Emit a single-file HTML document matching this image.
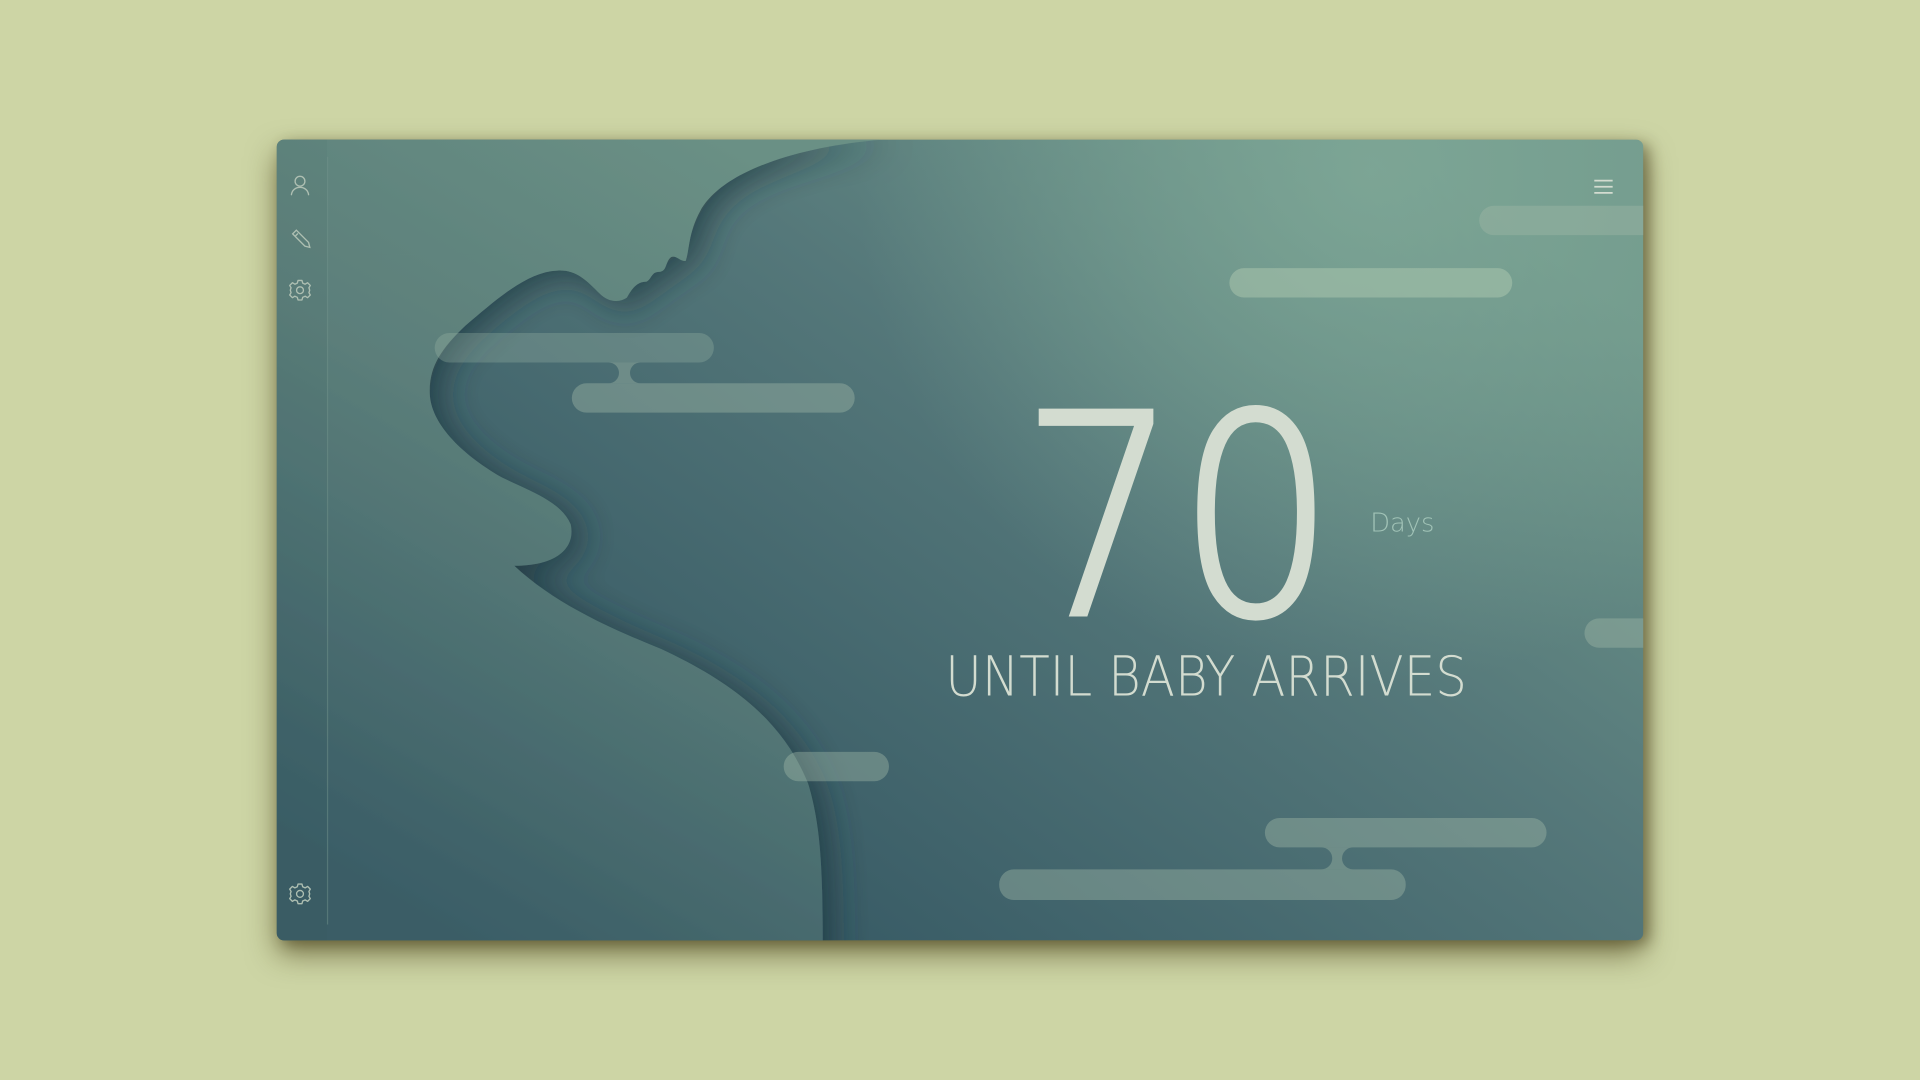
<!DOCTYPE html>
<html><head><meta charset="utf-8"><style>
html,body{margin:0;padding:0;width:1920px;height:1080px;overflow:hidden;background:#cdd5a5;}
#card{position:absolute;left:277px;top:140px;width:1366px;height:800px;border-radius:7px;box-shadow:0 14px 30px rgba(70,60,20,.6),6px 4px 14px rgba(60,50,20,.45);}
svg{position:absolute;left:0;top:0;}
.t{font-family:"DejaVu Sans","Liberation Sans",sans-serif;font-weight:200;}
</style></head><body>
<div id="card"></div>
<svg width="1920" height="1080" viewBox="0 0 1568 882">
<defs>
<clipPath id="c"><rect x="226" y="114" width="1116" height="654" rx="6"/></clipPath>
<linearGradient id="wg" x1="680" y1="760" x2="1150" y2="120" gradientUnits="userSpaceOnUse">
<stop offset="0" stop-color="#395c66"/><stop offset=".55" stop-color="#55787a"/><stop offset="1" stop-color="#6f978a"/></linearGradient>
<radialGradient id="glow" cx="1120" cy="140" r="420" gradientUnits="userSpaceOnUse">
<stop offset="0" stop-color="#80a998" stop-opacity=".8"/><stop offset="1" stop-color="#80a998" stop-opacity="0"/></radialGradient>
<linearGradient id="lg" x1="300" y1="720" x2="640" y2="140" gradientUnits="userSpaceOnUse">
<stop offset="0" stop-color="#3a5d66"/><stop offset=".55" stop-color="#5b7e7a"/><stop offset="1" stop-color="#6a9085"/></linearGradient>
<filter id="sh" x="-20%" y="-20%" width="140%" height="140%"><feDropShadow dx="8" dy="4" stdDeviation="14" flood-color="#1c363d" flood-opacity=".7"/></filter>
</defs>
<g clip-path="url(#c)">
<rect x="226" y="114" width="1116" height="654" fill="url(#wg)"/>
<rect x="226" y="114" width="1116" height="654" fill="url(#glow)"/>
<path filter="url(#sh)" fill="url(#lg)" d="M200,100 L720,114 C650,120 590,140 572,172 C562,190 563,205 560,213 C556,214 552,208 548,210 C543,214 545,222 538,222 C532,222 532,228 528,230 C520,230 516,236 512,243 C505,248 496,246 490,240 C478,228 470,220 455,221 C430,222 405,245 380,266 C360,285 350,300 351,322 C352,345 375,370 410,390 C435,402 458,410 466,428 C470,445 458,462 420,462 C450,490 490,510 540,530 C600,558 640,590 660,640 C672,680 672,720 672,800 L200,800 Z"/>
<rect x="226" y="114" width="41" height="654" fill="#2a4a52" fill-opacity=".05"/>
<line x1="267.5" y1="128" x2="267.5" y2="755" stroke="#6f918a" stroke-opacity=".5" stroke-width="1"/>
<g fill="#9fb8a8" fill-opacity=".42">
<rect x="1208" y="168" width="160" height="24" rx="12"/>
<rect x="1004" y="219" width="231" height="24" rx="12" fill="#a9c4ad" fill-opacity=".55"/>
<rect x="355" y="272" width="228" height="24" rx="12" fill-opacity=".3"/>
<rect x="467" y="313" width="231" height="24" rx="12"/>
<path d="M497,296 A8,8 0 0 1 497,313 L523,313 A8,8 0 0 1 523,296 Z"/>
<rect x="1294" y="505" width="80" height="24" rx="12"/>
<rect x="640" y="614" width="86" height="24" rx="12"/>
<rect x="1033" y="668" width="230" height="24" rx="12"/>
<rect x="816" y="710" width="332" height="25" rx="12"/>
<path d="M1079,692 A9,9 0 0 1 1079,710 L1105,710 A9,9 0 0 1 1105,692 Z"/>
</g>
<text class="t" x="834" y="501" font-size="226" fill="#d3dcd0" stroke="#d3dcd0" stroke-width="5" textLength="256" lengthAdjust="spacingAndGlyphs">70</text>
<text class="t" x="1119" y="434" font-size="21" fill="#a1c3b7">Days</text>
<text class="t" x="772" y="568" font-size="45" fill="#d3dcd0" textLength="426" lengthAdjust="spacingAndGlyphs">UNTIL BABY ARRIVES</text>
<g stroke="#aebfb2" stroke-width="1.1" fill="none" stroke-linecap="round">
<circle cx="245" cy="148" r="4"/>
<path d="M238,159 C239,151 251,151 252,159"/>
<path d="M239,191 L242,188 L252,198 L253,202 L249,201 Z M241,193 L243,191"/>
<g transform="translate(245,237)">
<circle r="2.8"/>
<path d="M-1.6,-8 L1.6,-8 L2.2,-5.8 L4.2,-4.9 L6.2,-6.1 L8.4,-3.9 L7.3,-2 L7.9,0 L7.3,2 L8.4,3.9 L6.2,6.1 L4.2,4.9 L2.2,5.8 L1.6,8 L-1.6,8 L-2.2,5.8 L-4.2,4.9 L-6.2,6.1 L-8.4,3.9 L-7.3,2 L-7.9,0 L-7.3,-2 L-8.4,-3.9 L-6.2,-6.1 L-4.2,-4.9 L-2.2,-5.8 Z" stroke-linejoin="round"/>
</g>
<g transform="translate(245,730)">
<circle r="2.8"/>
<path d="M-1.6,-8 L1.6,-8 L2.2,-5.8 L4.2,-4.9 L6.2,-6.1 L8.4,-3.9 L7.3,-2 L7.9,0 L7.3,2 L8.4,3.9 L6.2,6.1 L4.2,4.9 L2.2,5.8 L1.6,8 L-1.6,8 L-2.2,5.8 L-4.2,4.9 L-6.2,6.1 L-8.4,3.9 L-7.3,2 L-7.9,0 L-7.3,-2 L-8.4,-3.9 L-6.2,-6.1 L-4.2,-4.9 L-2.2,-5.8 Z" stroke-linejoin="round"/>
</g>
</g>
<g stroke="#d3dcd0" stroke-width="1.4">
<line x1="1302" y1="147.5" x2="1317" y2="147.5"/>
<line x1="1302" y1="152.5" x2="1317" y2="152.5"/>
<line x1="1302" y1="157.5" x2="1317" y2="157.5"/>
</g>
</g>
</svg>
</body></html>
